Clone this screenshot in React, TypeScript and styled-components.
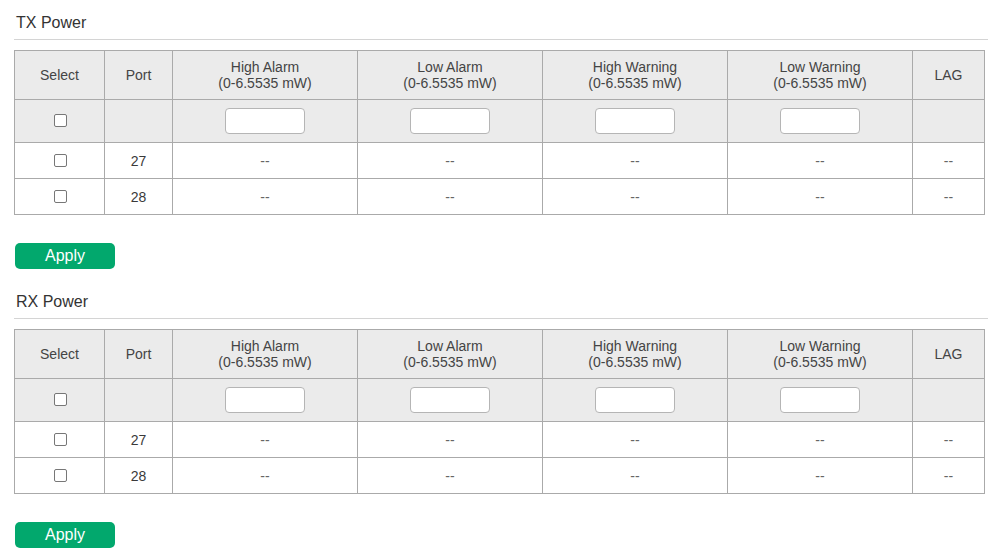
import React from "react";
import styled, { createGlobalStyle } from "styled-components";

const GlobalStyle = createGlobalStyle`
  body {
    margin: 0;
    background: #fff;
    font-family: "Liberation Sans", Arial, sans-serif;
    color: #333;
  }
`;

const Page = styled.div`
  padding: 0 15px 0 14px;
  width: 974px;
`;

const Section = styled.section<{ $first?: boolean }>`
  margin-top: ${(p) => (p.$first ? "12px" : "22px")};
`;

const Title = styled.div`
  font-size: 16px;
  line-height: 20px;
  padding: 1px 0 6px 2px;
  border-bottom: 1px solid #d4d4d4;
  color: #333;
`;

const Table = styled.table`
  margin-top: 10px;
  width: 971px;
  border-collapse: collapse;
  table-layout: fixed;
  font-size: 14px;
  color: #3a3a3a;
  border: 1px solid #aaa;
`;

const Cell = styled.td`
  border: 1px solid #aaa;
  text-align: center;
  padding: 0;
  vertical-align: middle;
`;

const HeadCell = styled(Cell).attrs({ as: "th" })`
  font-weight: normal;
  line-height: 16px;
  background: #ebebeb;
  height: 48px;
  color: #444;
`;

const FilterRow = styled.tr`
  height: 43px;
  background: #ebebeb;
`;

const DataRow = styled.tr`
  height: 36px;
  background: #fff;
`;

const Dash = styled(Cell)`
  color: #666;
`;

const Check = styled.span`
  display: inline-block;
  width: 11px;
  height: 11px;
  margin: 0 0 2px 1px;
  border: 1px solid #777;
  border-radius: 2px;
  background: #fff;
  vertical-align: middle;
`;

const Input = styled.input`
  box-sizing: border-box;
  width: 80px;
  height: 26px;
  border: 1px solid #b5b5b5;
  border-radius: 4px;
  background: #fff;
  vertical-align: middle;
  outline: none;
`;

const ApplyButton = styled.button`
  display: block;
  margin: 28px 0 0 1px;
  width: 100px;
  height: 26px;
  border: none;
  border-radius: 5px;
  background: #02a86d;
  color: #fff;
  font-family: "Liberation Sans", Arial, sans-serif;
  font-size: 16px;
  line-height: 26px;
  padding: 0;
  cursor: pointer;
`;

const widths = [90, 68, 185, 185, 185, 185, 72];
const ranges = ["High Alarm", "Low Alarm", "High Warning", "Low Warning"];
const ports = ["27", "28"];

function PowerTable({ title, first }: { title: string; first?: boolean }) {
  return (
    <Section $first={first}>
      <Title>{title}</Title>
      <Table>
        <colgroup>
          {widths.map((w, i) => (
            <col key={i} style={{ width: w }} />
          ))}
        </colgroup>
        <thead>
          <tr>
            <HeadCell>Select</HeadCell>
            <HeadCell>Port</HeadCell>
            {ranges.map((r) => (
              <HeadCell key={r}>
                {r}
                <br />
                (0-6.5535 mW)
              </HeadCell>
            ))}
            <HeadCell>LAG</HeadCell>
          </tr>
        </thead>
        <tbody>
          <FilterRow>
            <Cell>
              <Check />
            </Cell>
            <Cell />
            {ranges.map((r) => (
              <Cell key={r}>
                <Input type="text" />
              </Cell>
            ))}
            <Cell />
          </FilterRow>
          {ports.map((p) => (
            <DataRow key={p}>
              <Cell>
                <Check />
              </Cell>
              <Cell>{p}</Cell>
              {ranges.map((r) => (
                <Dash key={r}>--</Dash>
              ))}
              <Dash>--</Dash>
            </DataRow>
          ))}
        </tbody>
      </Table>
      <ApplyButton>Apply</ApplyButton>
    </Section>
  );
}

export default function App() {
  return (
    <>
      <GlobalStyle />
      <Page>
        <PowerTable title="TX Power" first />
        <PowerTable title="RX Power" />
      </Page>
    </>
  );
}
